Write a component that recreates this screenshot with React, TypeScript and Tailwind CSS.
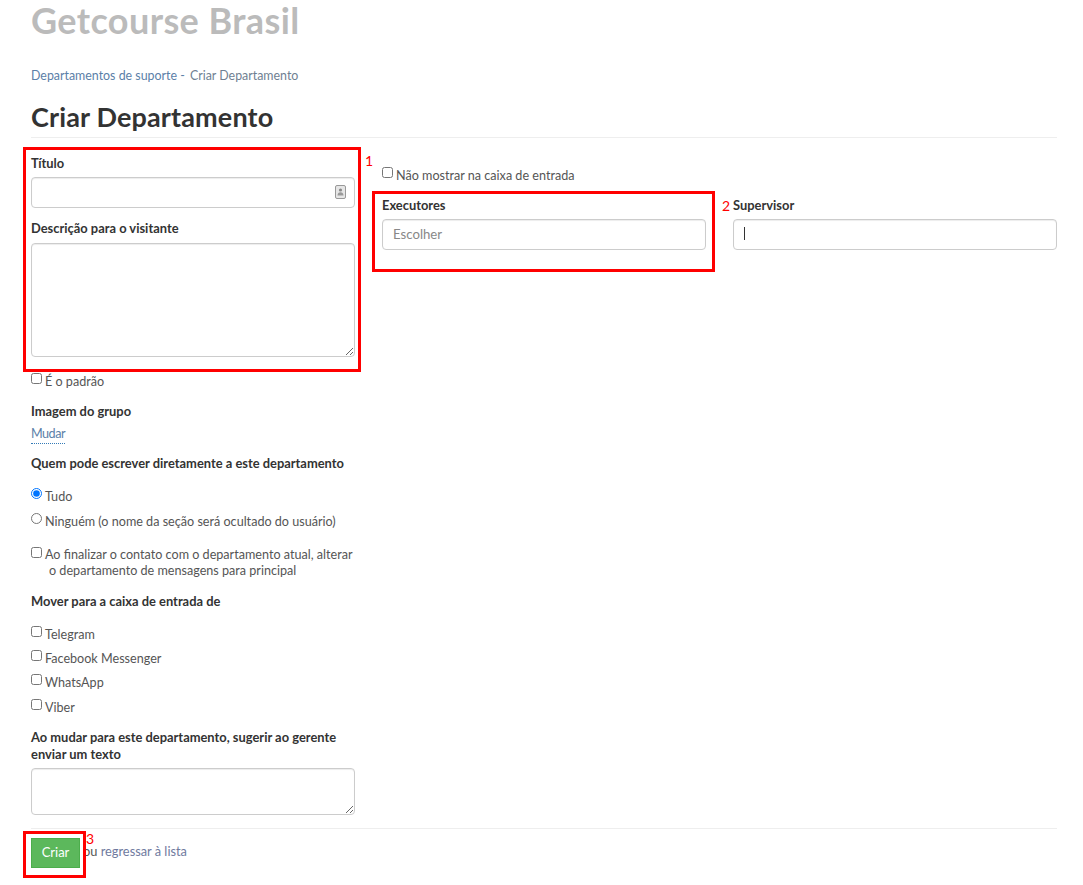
const label = "block text-[12.9px] leading-[17px] font-bold text-[#333]";
const control = "block w-full rounded-[4px] border border-[#ccc] bg-white shadow-[inset_0_1px_1px_rgba(0,0,0,0.075)]";
const body = "text-[12.6px] leading-[18px] text-[#555]";

function Check({ text, className }: { text: string; className?: string }) {
  return (
    <label className={`flex items-start ${body} ${className ?? ""}`}>
      <input type="checkbox" className="m-0 mr-[3px] h-[11px] w-[11px] shrink-0" />
      <span>{text}</span>
    </label>
  );
}

function Radio({ text, checked, className }: { text: string; checked?: boolean; className?: string }) {
  return (
    <label className={`flex items-start ${body} ${className ?? ""}`}>
      <input type="radio" name="who" defaultChecked={checked} className="m-0 mr-[3px] h-[11px] w-[11px] shrink-0" />
      <span>{text}</span>
    </label>
  );
}

function ContactIcon() {
  return (
    <svg width="11" height="14" viewBox="0 0 11 14" className="absolute right-[9px] top-[8px]">
      <rect x="0.5" y="0.5" width="10" height="13" rx="1.5" fill="#e6e6e6" stroke="#999" />
      <circle cx="5.5" cy="5" r="1.6" fill="#888" />
      <path d="M2.5 10.5c0-2 1.3-3.2 3-3.2s3 1.2 3 3.2z" fill="#999" />
    </svg>
  );
}

function Annotation({ className, number, numberClass }: { className: string; number: string; numberClass: string }) {
  return (
    <>
      <div className={`pointer-events-none absolute border-[3px] border-[#f00] ${className}`} />
      <span className={`absolute text-[14px] leading-[16px] text-[#f00] ${numberClass}`}>{number}</span>
    </>
  );
}

export default function App() {
  return (
    <div className="relative h-[885px] w-[1083px] overflow-hidden bg-white pl-[31px] pr-[26px] font-['Lato','Open_Sans',sans-serif]">
      <h2 className="m-0 h-[40px] text-[36px] leading-[40px] font-bold tracking-[0.4px] text-[#bbb]">Getcourse Brasil</h2>

      <div className="mt-[27px] text-[12.4px] leading-[18px] text-[#5b80a8]">
        <a>Departamentos de suporte</a>
        <span> - </span>
        <a className="ml-[2px] text-[#6f7f92]">Criar Departamento</a>
      </div>

      <h1 className="mt-[14px] border-b border-[#eee] pb-[2px] text-[27px] leading-[36px] font-bold tracking-[0.15px] text-[#333]">
        Criar Departamento
      </h1>

      <div className="flex gap-[27px]">
        <div className="w-[324px] shrink-0">
          <label className={`${label} mt-[17px]`}>Título</label>
          <div className="relative mt-[5px]">
            <input className={`${control} h-[31px] px-3`} />
            <ContactIcon />
          </div>
          <label className={`${label} mt-[12px]`}>Descrição para o visitante</label>
          <textarea className={`${control} mt-[6px] h-[114px] px-3 py-1`} />

          <Check text="É o padrão" className="mt-[16px]" />

          <div className={`${label} mt-[12px]`}>Imagem do grupo</div>
          <a className="mt-[2px] inline-block border-b border-dotted border-[#337ab7] text-[12.6px] leading-[18px] tracking-[-0.5px] text-[#5b80a8]">Mudar</a>

          <div className={`${label} mt-[11px]`}>Quem pode escrever diretamente a este departamento</div>
          <Radio text="Tudo" checked className="mt-[16px]" />
          <Radio text="Ninguém (o nome da seção será ocultado do usuário)" className="mt-[7px]" />

          <label className={`flex items-start ${body} mt-[16px]`}>
            <input type="checkbox" className="m-0 mr-[3px] h-[11px] w-[11px] shrink-0" />
            <span className="whitespace-nowrap leading-[16px]">
              Ao finalizar o contato com o departamento atual, alterar
              <br />
              <span className="ml-[4px]">o departamento de mensagens para principal</span>
            </span>
          </label>

          <div className={`${label} mt-[14px]`}>Mover para a caixa de entrada de</div>
          <Check text="Telegram" className="mt-[16px]" />
          <Check text="Facebook Messenger" className="mt-[6px]" />
          <Check text="WhatsApp" className="mt-[6px]" />
          <Check text="Viber" className="mt-[7px]" />

          <div className={`${label} mt-[12px]`}>
            Ao mudar para este departamento, sugerir ao gerente enviar um texto
          </div>
          <textarea className={`${control} mt-[5px] h-[47px] px-3 py-1`} />
        </div>

        <div className="flex-1">
          <Check text="Não mostrar na caixa de entrada" className="mt-[29px]" />
          <div className="mt-[12px] flex gap-[27px]">
            <div className="flex-1">
              <label className={label}>Executores</label>
              <input placeholder="Escolher" className={`${control} mt-[5px] h-[31px] px-[10px] pb-[2px] text-[13.2px] placeholder:text-[#888]`} />
            </div>
            <div className="flex-1">
              <label className={label}>Supervisor</label>
              <div className={`${control} mt-[5px] flex h-[31px] items-center px-[10px] pb-[2px]`}>
                <span className="h-[13px] w-px bg-[#333]" />
              </div>
            </div>
          </div>
        </div>
      </div>

      <div className="mt-[13px] flex items-center gap-[3px] border-t border-[#eee] pt-[9px] text-[12.8px] text-[#555]">
        <button className="h-[30px] w-[49px] border border-[#4cae4c] bg-[#5cb85c] text-[13px] text-white">Criar</button>
        <span className="mb-[2px]">
          ou <a className="text-[#6f7a9e]">regressar à lista</a>
        </span>
      </div>

      <Annotation className="left-[23px] top-[147px] h-[225px] w-[338px]" number="1" numberClass="left-[365px] top-[153px]" />
      <Annotation className="left-[372px] top-[191px] h-[81px] w-[343px]" number="2" numberClass="left-[722px] top-[198px]" />
      <Annotation className="left-[23px] top-[831px] h-[47px] w-[63px]" number="3" numberClass="left-[86px] top-[831px]" />
    </div>
  );
}
